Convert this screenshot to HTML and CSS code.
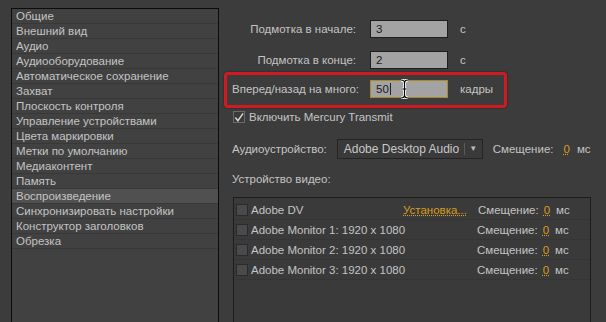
FILE: index.html
```html
<!DOCTYPE html>
<html>
<head>
    <title>Воспроизведение</title>
    <link rel="stylesheet" href="styles.css">
</head>
<body>
<div class="prefs">
    <ul class="nav-list">
        <li>Общие</li>
        <li>Внешний вид</li>
        <li>Аудио</li>
        <li>Аудиооборудование</li>
        <li>Автоматическое сохранение</li>
        <li>Захват</li>
        <li>Плоскость контроля</li>
        <li>Управление устройствами</li>
        <li>Цвета маркировки</li>
        <li>Метки по умолчанию</li>
        <li>Медиаконтент</li>
        <li>Память</li>
        <li class="active">Воспроизведение</li>
        <li>Синхронизировать настройки</li>
        <li>Конструктор заголовков</li>
        <li>Обрезка</li>
    </ul>
    <div class="panel">
        <div class="field-row first">
            <span class="field-label">Подмотка в начале:</span>
            <span class="field-input">3</span>
            <span class="unit">с</span>
        </div>
        <div class="field-row">
            <span class="field-label">Подмотка в конце:</span>
            <span class="field-input">2</span>
            <span class="unit">с</span>
        </div>
        <div class="highlight">
            <div class="field-row">
                <span class="field-label">Вперед/назад на много:</span>
                <span class="field-input focused">50<span class="caret"></span>
                    <svg class="ibeam" width="9" height="20" viewBox="0 0 9 20">
                        <path d="M1 1 Q4.5 1 4.5 4 Q4.5 1 8 1 M4.5 4 V16 M1 19 Q4.5 19 4.5 16 Q4.5 19 8 19 M2.5 10 H6.5" fill="none" stroke="#fff" stroke-width="3"/>
                        <path d="M1 1 Q4.5 1 4.5 4 Q4.5 1 8 1 M4.5 4 V16 M1 19 Q4.5 19 4.5 16 Q4.5 19 8 19 M2.5 10 H6.5" fill="none" stroke="#000" stroke-width="1.2"/>
                    </svg>
                </span>
                <span class="unit">кадры</span>
            </div>
        </div>
        <label class="check-row">
            <span class="checkbox checked">
                <svg width="11" height="11" viewBox="0 0 11 11"><path d="M1.5 5.5 L4.3 9 L10 1" fill="none" stroke="#d8d8d8" stroke-width="1.6"/></svg>
            </span>
            Включить Mercury Transmit
        </label>
        <div class="audio-row">
            <span>Аудиоустройство:</span>
            <div class="select">
                <span class="select-value">Adobe Desktop Audio</span>
                <span class="select-arrow">▼</span>
            </div>
            <span class="offset">Смещение:</span>
            <span class="hot">0</span>
            <span>мс</span>
        </div>
        <div class="section-title">Устройство видео:</div>
        <div class="device-list">
            <div class="device">
                <span class="checkbox"></span>
                <span class="device-name">Adobe DV</span>
                <span class="hot setup">Установка...</span>
                <span class="offset">Смещение:</span>
                <span class="hot">0</span>
                <span>мс</span>
            </div>
            <div class="device">
                <span class="checkbox"></span>
                <span class="device-name">Adobe Monitor 1: 1920 x 1080</span>
                <span class="offset">Смещение:</span>
                <span class="hot">0</span>
                <span>мс</span>
            </div>
            <div class="device">
                <span class="checkbox"></span>
                <span class="device-name">Adobe Monitor 2: 1920 x 1080</span>
                <span class="offset">Смещение:</span>
                <span class="hot">0</span>
                <span>мс</span>
            </div>
            <div class="device">
                <span class="checkbox"></span>
                <span class="device-name">Adobe Monitor 3: 1920 x 1080</span>
                <span class="offset">Смещение:</span>
                <span class="hot">0</span>
                <span>мс</span>
            </div>
        </div>
    </div>
</div>
</body>
</html>
```

FILE: styles.css
```css
body {
    font-family: "Liberation Sans", Arial, sans-serif;
    font-size: 11.5px;
    color: #c4c4c4;
    background-color: #3c3c3c;
    margin: 0;
    height: 322px;
    overflow: hidden;
}
.prefs {
    display: flex;
    padding: 8px 0 0 11px;
    height: 314px;
}
.nav-list {
    list-style: none;
    margin: 0;
    padding: 0;
    width: 206px;
    border: 1px solid #0c0c0c;
    border-bottom: none;
    background: #414141;
    flex-shrink: 0;
}
.nav-list li {
    height: 14px;
    line-height: 14px;
    padding-left: 4px;
    border-bottom: 1px solid #383838;
    white-space: nowrap;
}
.nav-list li.active {
    background: #505050;
}
.panel {
    flex: 1;
    padding-left: 5px;
    position: relative;
}
.field-row {
    display: flex;
    align-items: center;
    height: 18px;
    padding-left: 8px;
}
.field-row.first {
    margin-top: 12px;
    margin-bottom: 13px;
}
.field-label {
    width: 124px;
    text-align: right;
    margin-right: 14px;
    white-space: nowrap;
}
.field-input {
    position: relative;
    box-sizing: border-box;
    width: 78px;
    height: 18px;
    line-height: 16px;
    padding-left: 5px;
    background: #a3a3a3;
    border: 1px solid #1e1e1e;
    color: #1c1c1c;
}
.field-input.focused {
    border-color: #a98a28;
}
.caret {
    display: inline-block;
    width: 1px;
    height: 12px;
    background: #222;
    vertical-align: -2px;
    margin-left: 1px;
}
.ibeam {
    position: absolute;
    left: 29px;
    top: -2px;
}
.unit {
    margin-left: 12px;
}
.highlight {
    box-sizing: border-box;
    width: 283px;
    height: 36px;
    margin-top: 3px;
    padding-top: 5px;
    border: 3px solid #cf1a22;
    border-radius: 4px;
    box-shadow: 0 0 2px rgba(0, 0, 0, 0.6);
}
.highlight .field-row {
    padding-left: 5px;
}
.check-row {
    display: flex;
    align-items: center;
    height: 14px;
    margin-top: 2px;
    padding-left: 9px;
    white-space: nowrap;
}
.checkbox {
    box-sizing: border-box;
    display: inline-flex;
    align-items: center;
    justify-content: center;
    width: 12px;
    height: 12px;
    background: #4a4a4a;
    border: 1px solid #2a2a2a;
    margin-right: 4px;
    flex-shrink: 0;
}
.checkbox.checked {
    background: #3a3a3a;
    border-color: #6a6a6a;
}
.audio-row {
    display: flex;
    align-items: center;
    height: 20px;
    margin-top: 15px;
    padding-left: 8px;
    white-space: nowrap;
}
.select {
    display: flex;
    align-items: center;
    box-sizing: border-box;
    width: 146px;
    height: 20px;
    margin-left: 10px;
    border: 1px solid #242424;
    background: #3a3a3a;
}
.select-value {
    flex: 1;
    padding-left: 6px;
    font-size: 12px;
    color: #c8c8c8;
}
.select-arrow {
    width: 17px;
    text-align: center;
    font-size: 8px;
    color: #bbb;
    border-left: 1px solid #5a5a5a;
    line-height: 12px;
}
.offset {
    margin-left: 10px;
    margin-right: 10px;
}
.hot {
    color: #d69d1e;
    text-decoration: underline dotted;
    margin-right: 7px;
}
.section-title {
    margin-top: 11px;
    padding-left: 8px;
    height: 18px;
    line-height: 18px;
}
.device-list {
    box-sizing: border-box;
    width: 358px;
    height: 140px;
    margin-top: 9px;
    margin-left: 9px;
    border: 1px solid #1c1c1c;
    background: #3a3a3a;
    padding-top: 2px;
}
.device {
    display: flex;
    align-items: center;
    height: 19px;
    padding-left: 2px;
    border-bottom: 1px solid #353535;
    white-space: nowrap;
}
.device .checkbox {
    margin-right: 3px;
}
.device-name {
    width: 152px;
}
.device .hot {
    margin-right: 6px;
}
.device .setup {
    margin-right: 0;
}
.device .offset {
    margin-left: 0;
    margin-right: 5px;
}
.device-name + .offset {
    margin-left: 74px;
}
.setup + .offset {
    margin-left: 11px;
}
```
